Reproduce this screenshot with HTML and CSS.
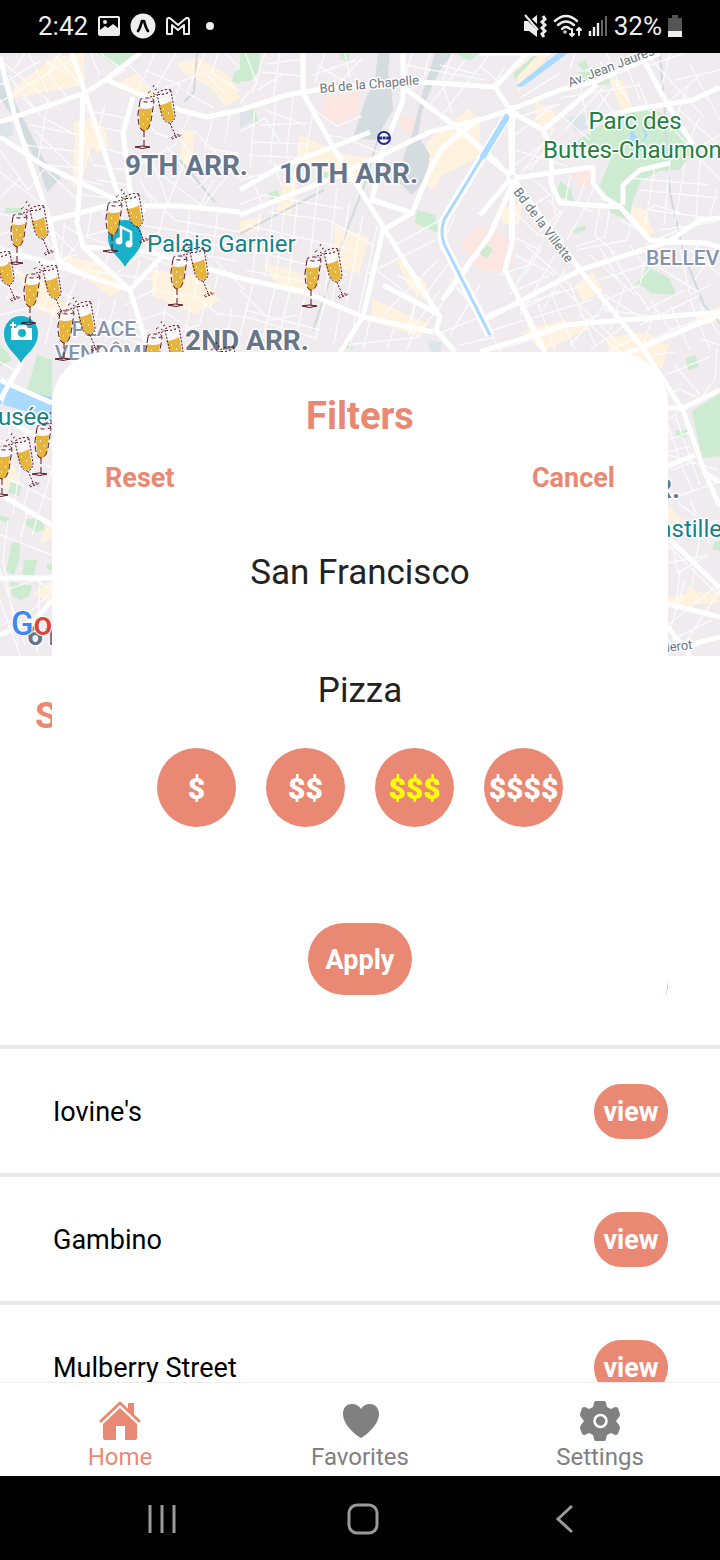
FILE: index.html
```html
<!DOCTYPE html>
<html lang="en">
<head>
<meta charset="utf-8">
<meta name="viewport" content="width=device-width, initial-scale=1">
<title>Filters</title>
<link rel="stylesheet" href="styles.css">
</head>
<body>
<header class="status">
  <div class="status-group">
    <span class="status-text">2:42</span>
    <svg width="22" height="20" viewBox="0 0 22 20"><rect x="1" y="1" width="20" height="18" rx="1" fill="none" stroke="#eee" stroke-width="2"/><circle cx="7" cy="6" r="2" fill="#eee"/><path d="M2 14l5-4 3 2 5-4 5 4v6H2z" fill="#eee"/></svg>
    <svg width="26" height="26" viewBox="0 0 26 26"><circle cx="13" cy="13" r="12.5" fill="#eee"/><path d="M8 18c2-2 3-7 4-10h2c1 3 2 8 4 10" fill="none" stroke="#000" stroke-width="2.6" stroke-linecap="round" stroke-linejoin="round"/></svg>
    <svg width="24" height="18" viewBox="0 0 24 18"><path d="M1 17V3c0-2 2-3 4-1l7 6 7-6c2-2 4-1 4 1v14h-5V8l-6 5-6-5v9z" fill="none" stroke="#eee" stroke-width="2" stroke-linejoin="round"/></svg>
    <span class="status-dot"></span>
  </div>
  <div class="status-group status-right">
    <svg width="24" height="24" viewBox="0 0 24 24" fill="#eee"><path d="M1 7h4l9 9v7l-8-6H1zM9 5l5-4v9z"/><path d="M2 1l13 15" stroke="#eee" stroke-width="2"/><path d="M20 2l2 3-3 3 3 3-3 3 3 3-3 3 2 3" fill="none" stroke="#eee" stroke-width="3"/></svg>
    <svg width="29" height="24" viewBox="0 0 29 24" fill="none" stroke="#eee" stroke-width="2.4" stroke-linecap="round"><path d="M2 7q11-10 22 0M5 11q8-7 16 0M9 15q4-4 8 0"/><circle cx="12" cy="18" r=".6"/><path d="M19 15v7m-2-2l2 2 2-2M26 21v-7m-2 2l2-2 2 2" stroke-width="2"/></svg>
    <svg width="20" height="22" viewBox="0 0 20 22"><path d="M2 21v-5M6 21v-9M10 21V8" stroke="#eee" stroke-width="2.4"/><path d="M14 21V5M18 21V1" stroke="#666" stroke-width="2"/></svg>
    <span class="status-text">32%</span>
    <svg width="14" height="24" viewBox="0 0 14 24"><path d="M4 1h6v3h4v19H0V4h4z" fill="#555"/><path d="M0 17h14v6H0z" fill="#eee"/></svg>
  </div>
</header>

<main class="screen">
  <svg class="map" viewBox="0 53 720 603" preserveAspectRatio="xMidYMin slice" role="img" aria-label="Map of Paris">
    <defs>
      <g id="glasses">
        <path d="M5 15L4 24L17 25L18 16Z" fill="#fff" fill-opacity=".6"/>
        <path d="M22 8L24 20L37 17L35 6Z" fill="#fff" fill-opacity=".6"/>
        <path d="M4 23Q10 25 17 23L15 40Q13 46 9 46Q5 46 5 40Z" fill="#e5b53e"/>
        <path d="M23 20Q30 20 36 16L39 32Q39 36 35 37Q31 37 29 34Z" fill="#e5b53e"/>
        <g fill="none" stroke="#5b1220" stroke-width="1">
          <ellipse cx="12" cy="15" rx="7" ry="2" stroke-dasharray="4 3"/>
          <path d="M5 16L3 29Q3 45 9 46Q15 46 17 30L19 16M9 46L9 61" stroke-dasharray="6 3"/>
          <path d="M0 62Q7 60 15 62Q8 65 0 62" />
          <ellipse cx="29" cy="7" rx="7" ry="2" transform="rotate(-14 29 7)" stroke-dasharray="2 2"/>
          <path d="M22 9L27 31Q30 38 35 38Q40 36 40 30L36 6M35 38L41 52M37 54L47 50M36 53Q40 49 46 50" stroke-dasharray="2 1.5"/>
          <path d="M13 8l3-2M15 12l5-1M18 2l1-2M20 5l2-1M18 8l3 2" stroke-dasharray="2 1"/>
        </g>
        <path d="M8 29h1M12 34h1M8 39h1M28 24h1M33 28h1" stroke="#fff" stroke-width="1.5"/>
      </g>
      <path id="pin" d="M0 0C-5-10-17-15-17-30A17 17 0 0 1 17-30C17-15 5-10 0 0Z" fill="#17b0c8"/>
    </defs>
    <rect y="53" width="720" height="603" fill="#efebef"/>

    <g fill="#fff3df">
      <path d="M52 58l32-5v32l-48 9-24 4 2-10zM74 122l18-4 12 10 5 18-12 8-5-9-12 42-8-2 3-44zM119 83l17-10 8 12 14 6-6 10zM178 63l20-5 32 18 10 22-14 8-20-22-22-10z"/>
      <path d="M183 130l12 2-4 35-12-4zM60 255l40 8 28 24-18 10-32-26zM15 270l30 10 26 31-8 10-28-13zM151 270l50 6 20 24-26 14-42-18z"/>
      <path d="M240 221l22-4-2 12-20 6zM286 172l13 3-8 40-14-4zM300 135l38 18 32 5-6 30-24-10-24-12-20-4zM335 225l34 13-10 35-26-6zM262 262l40 12 14 24-36-9z"/>
      <path d="M427 142l42-33 11 12v35l-38 20-8 14-20-12zM395 257l30 24 8 25-24-18zM372 299l55 24-6 14-50-16zM518 65l16-12 14 2-30 38zM535 100l20 12-2 19-16-6zM609 80l14 0 10 32-10 3z"/>
      <path d="M500 207l22-4-3 22-17-2zM620 205l24 4 10 24-8 5-16-20zM575 285l18-13 10 18-20 12zM520 332l44-12 25 9-45 22zM605 338l42-6 20 15-20 15-34-2zM655 347l15-4-8 26-14-8zM696 313l24-6v14l-20 5z"/>
      <path d="M0 455l12 5 8 23-8 8-12-6zM40 545l12-8v-10h-8zM32 595l12-10 8-5v25l-14-10zM668 505l14 15 10 4-12 12-12-10zM668 598l18-4 3-8 8 6 22 1v10l-26 1-10 6-15-7z"/>
    </g>
    <g fill="#fce6e2"><path d="M323 97l38-6-3 24-10 4-2 8-24-10zM400 116l17 3-2 15-16-5zM480 225l20 8 12 13 1 20-15 6-18-2-20-25zM569 170l24-2-1 16-12 3z"/></g>
    <g fill="#cdebd0">
      <path d="M97 53h39l-10 15-10-2zM234 72l6-2v14l-8-2zM240 53h20l-2 19-8 9h-10zM341 53l9 1-2 8-8-3zM457 53h22l-8 8-8-3zM250 110l5-3 3 15-6 2zM5 208h17v5H5zM121 197l11-4 2 6-9 3zM268 193l10-3 2 9-8 1zM324 172l9 1-4 7-5-2zM417 210l18 5 4 18-24-10zM343 341l8-1 2 9-10-1zM484 242l9 8-7 9-9-8z"/>
      <path d="M560 181l12 9v8l-15-7zM578 72h18l12-6 2 18-26 1zM540 53l-25 26-2-5 23-21zM577 64l8-4 4 7-5 3zM576 142l15-11 30-17 30-6 16 8 28 34-16 20-20 1-18 10-8 19-4 20-18-7-13-25 15-33zM557 190l13 0 5 12-15-5zM573 230l12-5 1 5-12 4zM635 286l12-20 23 13 6 16-25-2-8-7z"/>
      <path d="M0 344l8 10 4 6-12 6zM27 390l10-35 15 5v47l-15-5zM11 482l11 4-3 10-11-4zM24 519h18l3 11-9 2-10-7zM0 515l10 4-3 4-7-3zM12 542h8l-1 18-5 15-8-4zM24 560l13 0-3 16-12-2zM10 582l22 4-3 10-8 4-9-4zM47 563l5 2v6l-5-2zM685 359l10-4 4 11-10 5zM676 431l12-1-3 8-9-2zM692 411l28-18v63l-18 2zM715 541h5v10l-8-2z"/>
    </g>
    <g fill="#dde5eb"><path d="M0 120l12 3 2 12-14 4zM240 106l10 3 2 13-12 6zM568 118l20-6 2 16-15 4zM428 340l14 2-2 11-10-2zM0 70l8 2 4 8-12 4z"/></g>
    <g fill="#d5dcdf"><path d="M0 82l15 20 29 58 17 18-14 14-8-24-20-42L0 98zM378 53h12l-2 20 4 20 1 17-18 30-22-2 12-38 10-20zM435 53h18l-15 20-16 38-4 24 12 20-4 24-14 16-12-12 4-28 8-20 10-40z"/></g>
    <g fill="none" stroke="#d2d9dc" stroke-width="2"><path d="M197 53l-3 39-10 10M382 125l-16 55-22 58-31 92M240 234l84-44M660 53l4 50 6 90 14 62 20 50 16 18M180 160l35 42"/></g>
    <g fill="#aadaff"><path d="M558 53h10l-46 34-6-1z"/><path d="M0 378l32 14 20 5v28l-24-13-28-8z"/><path d="M630 128l8 10-4 8-4-4zM642 125l6 10-6 8 3-8z"/></g>

    <g class="street">
      <path d="M0 60l60 50M0 85l40-24M15 68l10-15M28 53l20 40M45 60l22 15M0 102l60-36 15-8M22 97l20 20 30 16M8 75l28 35M60 53l-12 20 20 25M30 125l50 10M25 145l56 7M38 160l10-60M55 55l25 30M90 53l10 22M0 150l28 40 20-25 32 3M0 172l44 34M0 198l20-20M35 130l45 45M46 170l32 30M100 53l25 18-16 8M130 65l30 35M155 53l-16 36M176 53l-20 34 10 20M160 90l45-18 20 22M205 53l-18 40 27 15M218 53l-6 20 28 18M225 53l14 14M145 70l35 15-10 22M85 110l40 8M90 125l33 7M90 145l35 9M93 165l33 5M97 180l32 5M105 105l-8 30M82 132l10 30M81 180l22 5M81 195l30 3"/>
      <path d="M140 110l15 23 28 8 12 25M155 103l-5 24M190 115l-15 30-45 25M213 118l-8 30 35 6M230 113l-5 30M165 145l30 38M193 130l30 30-25 28M218 157l22 22M150 155l18 48M188 153l-20 50M213 180l-15 30M140 180l12 22M145 190l30 30 65 12M158 172l45 35M240 160l-40 50M140 206l-8 20 15 20 90 15M165 207l-10 44M190 208l-5 47M218 212l-6 45M140 225l100 15M148 238l86 9M65 222l-5 42M63 225l20 12 30-8M55 232l20 20M92 207l-5 30 30 10M100 205l10 24M78 244l-20 24M98 255l-15 25M117 225l-12 40M85 270l70 10M115 275l25-20 30 10M125 305l28-15 42 6 25 20M135 322l30-10 30 20M140 260l-8 30M158 260l-5 35M180 255l-6 45M200 255l-6 45M215 260l30 30M220 265l-10 45"/>
      <path d="M0 214l50 10M0 235l35-15 24 40M0 246l44 18 35-10M10 215l14 45M30 217l-12 40M0 264l75 35M40 255l-15 45M60 260l-16 48M22 255l-15 44M76 280l-14 35M0 283l42 26 45 4M0 315l40-10M45 310l60 10 45 22M85 300l-10 40M100 298l-8 40M115 300l-10 42M55 305l-10 40M32 317l-8 45M10 330l20 30M62 320l85 25M130 325l30 10 40-10M165 308l-5 35M190 307l-5 30M205 303l-5 20M232 308l-5 30M215 313l36 5 65 20"/>
      <path d="M245 53l12 30-17 20M265 53l-12 40M280 53l-7 46M262 72l40 4M267 64l36-5M257 90l25-15M265 110l40 15M260 125l52-2M253 142l55 2M247 155l55 3M255 103l-5 65M276 100l-6 63M293 97l-7 60M240 132l25-14 15 24M240 180l30-8M250 175l12 28M274 163l8 24M288 158l4 26M240 204l24-9M313 112l-8 46M317 65l25 15 20-22M313 75l43-15M325 53l-10 30M345 53l5 25M405 65l80 15M412 53l-8 27M430 53l-8 30M410 90l20-20M452 53l-10 30 10 30M465 60l-35 45M485 60l-42 54M440 65l40 10M315 110l22 16 25-10M325 135l20 3 35 15M300 145l-9 50M260 213l-8 65M273 207l-8 70M285 203l-9 77M298 197l-10 88M318 187l-12 105M337 188l-12 108M350 202l-18 100M363 215l-17 90M377 226l-19 90M250 250l98 25M245 225l110 25M264 195l80 14M268 212l60 8 45 25M246 270l75 15"/>
      <path d="M240 290l30 30 28-5M245 310l75 20M254 280l-14 55M275 288l-12 50M290 290l-12 50M305 296l-8 35M325 301l-10 40M340 310l-6 34M355 318l-5 30M345 345l75-8M370 320l-7 30M395 325l-8 24M415 330l-8 20M365 275l70-35M370 265l60 46M395 245l45-25M398 275l20 12-8 45M420 280l-12 50M440 290l-32 45M383 315l55-55M455 215l-15 35M455 255l-30 40M468 270l-45 58M480 285l-30 50M450 280l40 40M480 255l-30 25M435 335l70-28M490 330l-35-45M460 345l35-8"/>
      <path d="M480 66l20 17M490 53l-10 14M505 67l-13 20M520 98l40-25M515 118l45-14M515 135l38-28M530 125l20-20M515 150l52 16M515 165l33-25M530 170l20-25M555 128l-30 40M550 150l-30 23M560 115l30 25M580 85l10 50M597 90l18 25M605 85l-40 45M615 85l-30 40M607 53l13 35M575 53l-5 15M600 62l30 40M625 62l15 37M560 98l80-13M645 53l60 65M650 65l35-12M670 53l-10 40M675 80l45-10M690 65l30 55M688 87l-18 45M700 75l-35 30M680 111l40 35M665 120l55 60M650 112l-12-30M700 118l-15 30M695 150l25-15"/>
      <path d="M535 180l15 15-25 15M550 180l5 35M570 175l-5 30M585 180l-8 25 16 7M595 185l-14 30-14 25M548 200l12 12-20 20M610 207l-5 30-30 10M600 205l-5 30 20 18M563 210l-15 25M635 212l-8 28-50 10M620 220l20 10M640 215l15-10 25 8M640 190l78 8M630 178l78 7M655 165l-10 60M670 160l-6 65M685 163l-10 60M700 160l-4 60M717 190l-8 30M650 210l60 8M660 230l55-8M645 245l40-18M510 235l30 15-15 25M513 210l25 25 25 5M515 255l40 20M525 245l45 40M500 275l35-12M510 293l40-18M520 310l40-20M540 245l-30 50M555 255l-35 60M565 270l-22 40M600 248l20 35M610 248l15 28 25 35M630 245l14 20-45 15M590 255l45 40M645 260l-5 25-35 15M665 250l-25 30M680 250l10 45 20-10M690 250l30 25M655 265l45 28M700 240l-8 20M715 250l-20 30M645 310l40-20M640 325l60-30M650 300l20 30 30-10M605 295l40 25M600 290l5 20 40 5M625 285l-15 45"/>
      <path d="M485 315l100-30M492 330l100-30M500 350l100-35M515 295l25 55M535 295l20 55M550 290l25 60M570 285l25 60M605 305l-35 40M625 325l-35 25M635 338l-30 15M560 285l60 60M580 315l40 38M480 305l20 48M655 310l-12 35M670 305l20 45M690 300l20 50M650 340l70-30M700 305l20 30M665 375l45-18M665 395l15-6 20 10 15-20 2-30M675 365l25 30M655 355l20-3M720 345l-20-6M668 455l50 15M668 420l20-15M668 425l15 45 10 20M675 415l25 70M668 440l22-8M672 470l20-8M668 452l23-6M678 503l42 30M668 500l50-18M690 500l20 45M680 530l40-10M668 563l40-8-30 18-5-25 15-18M680 570l-5 45M668 545l50 50M700 535l-8 50M668 625l50-40M720 590l-40 60M685 580l-15 50M710 575l10 20M672 640l40-20"/>
      <path d="M0 362l20 12M10 377l-8 28M0 440l52 28M0 460l40-22M0 475l52 25M10 425l-8 70M25 430l-12 85M40 438l-16 68M52 470l-20 65M0 535l52 20M8 520l-5 40 15 85M0 570l25 75M5 590l30-10 17 10M28 510l-8 30M0 626l35-18 17-17M40 578l-3 75M0 600l20 55"/>
    </g>
    <g class="road">
      <path d="M0 122L85 93L107 79L140 53M107 80L137 93L180 110L207 117L240 110L287 95L327 88L420 82L495 87M72 53L85 93L107 160L120 200M83 93L80 183L77 223L83 247L130 290L147 345M0 57L15 117L30 163L50 220L58 260L85 275M0 137L43 165L117 200L145 212M133 97L123 133L130 190L143 220M50 220L107 206L180 206L240 212M83 247L150 252L240 278M0 250L40 260L130 290L165 253"/>
      <path d="M303 53V93L333 147L377 217L393 243L440 317L436 330L455 352M240 190L280 167L333 147L370 132M240 215L333 178L382 155L430 132L480 120L510 110L560 90L597 81L660 53M403 53V100L383 150L372 200L412 213L430 170L442 148L480 118M403 87L460 130L500 165M412 213L383 230L363 317L340 352M240 278L307 293L363 317L433 332M383 285L440 315M442 300L490 235L512 185"/>
      <path d="M527 53L495 87L510 110L512 177L580 270L642 347L683 410L705 473L720 507M512 177V243L505 270L545 352M484 320L580 270L667 242L705 243L720 247M512 112L543 130L552 150L551 183L560 203L620 207L650 240L680 242M515 178L593 167L593 183L605 198L620 207M543 130L597 85M720 87L693 100L630 110L595 120M640 53L665 100L693 145M623 205L623 185L640 170L670 163M668 242L700 220L720 218M480 352L565 325L720 312M603 363L642 347L720 315M480 53L550 53M480 150L512 177L480 215M668 408L683 408L720 390M668 466L695 455M705 473L720 482M668 538L720 588M668 604L720 617M668 627L690 656M690 645L720 637M0 380L52 403M0 400L20 365L28 344M0 415L52 446M0 494L52 525M0 578H52M0 635L35 620L52 600"/>
    </g>
    <path d="M508 115L444 220Q440 232 444 244L490 335" fill="none" stroke="#fff" stroke-width="9"/>
    <path d="M508 115L444 220Q440 232 444 244L490 335" fill="none" stroke="#aadaff" stroke-width="3"/>
    <path d="M508 115L482 158" stroke="#aadaff" stroke-width="6"/>
    <path d="M512 105V240" stroke="#fff" stroke-width="6"/>
    <circle cx="512" cy="177" r="4" fill="#efebef" stroke="#fff" stroke-width="3"/>

    <circle cx="384" cy="138" r="6" fill="#fff" stroke="#1f2b8f" stroke-width="2"/>
    <path d="M379 138h10" stroke="#1f2b8f" stroke-width="3" stroke-dasharray="3 .6"/>
    <use href="#pin" x="125" y="267"/>
    <path d="M121 241V227L131 232V244" fill="none" stroke="#fff" stroke-width="2.500"/><circle cx="119" cy="241" r="3.500" fill="#fff"/><circle cx="129" cy="244" r="3.500" fill="#fff"/>
    <use href="#pin" x="21" y="363"/>
    <path d="M11 328h5l2-3h8l2 3h4v12H11z" fill="#fff"/><circle cx="22" cy="333" r="4" fill="#17b0c8"/><path d="M9 324h8M13 320v8" stroke="#17b0c8" stroke-width="4"/><path d="M10 325h6M13 322v6" stroke="#fff" stroke-width="2"/>

    <g class="map-labels">
      <g class="district">
        <text x="186.5" y="175" text-anchor="middle">9TH ARR.</text>
        <text x="348.5" y="183" text-anchor="middle">10TH ARR.</text>
        <text x="247" y="350" text-anchor="middle">2ND ARR.</text>
        <text x="680" y="498" text-anchor="end">R.</text>
        <text x="27" y="645">61</text>
      </g>
      <g class="quarter"><text x="104" y="336" text-anchor="middle">PLACE</text><text x="104" y="360" text-anchor="middle">VENDÔME</text><text x="646" y="265">BELLEV</text></g>
      <g class="poi"><text x="147" y="252">Palais Garnier</text><text x="-2" y="425">usée</text><text x="722" y="537" text-anchor="end">astille</text></g>
      <g class="park"><text x="635" y="129" text-anchor="middle">Parc des</text><text x="543" y="158">Buttes-Chaumon</text></g>
      <g class="street-name">
        <text transform="translate(320 93) rotate(-5)">Bd de la Chapelle</text>
        <text transform="translate(570 87) rotate(-21)">Av. Jean Jaurès</text>
        <text transform="translate(513 192) rotate(53)">Bd de la Villette</text>
        <text transform="translate(667 652) rotate(-7)">lerot</text>
      </g>
    </g>
    <use href="#glasses" x="135" y="85"/><use href="#glasses" x="103" y="189"/><use href="#glasses" x="8" y="201"/><use href="#glasses" x="-26" y="247"/><use href="#glasses" x="21" y="261"/><use href="#glasses" x="55" y="297"/><use href="#glasses" x="168" y="243"/><use href="#glasses" x="143" y="321"/><use href="#glasses" x="198" y="342"/><use href="#glasses" x="302" y="244"/><use href="#glasses" x="32" y="412"/><use href="#glasses" x="-7" y="433"/>
    <text class="map-logo" x="11" y="635"><tspan fill="#4285f4">G</tspan><tspan fill="#db4437">o</tspan></text>
  </svg>

  <section class="results">
    <h1 class="results-title">S</h1>
    <ul class="list">
      <li class="row"><span></span><button class="view" type="button"></button></li>
      <li class="row"><span>Iovine's</span><button class="view" type="button">view</button></li>
      <li class="row"><span>Gambino</span><button class="view" type="button">view</button></li>
      <li class="row"><span>Mulberry Street</span><button class="view" type="button">view</button></li>
    </ul>
  </section>

  <form class="panel">
    <h2 class="panel-title">Filters</h2>
    <div class="panel-actions">
      <button class="link" type="reset">Reset</button>
      <button class="link" type="button">Cancel</button>
    </div>
    <input class="field city" type="text" aria-label="City" value="San Francisco">
    <input class="field food" type="text" aria-label="Food" value="Pizza">
    <div class="prices">
      <button class="price" type="button">$</button>
      <button class="price" type="button">$$</button>
      <button class="price selected" type="button">$$$</button>
      <button class="price" type="button">$$$$</button>
    </div>
    <button class="apply" type="button">Apply</button>
  </form>
</main>

<nav class="tabs">
  <a class="tab active" href="#home"><svg width="42" height="40" viewBox="0 0 42 40" fill="currentColor"><path d="M29 2h6v13l-6-6z"/><path d="M2 20L21 2l19 18" fill="none" stroke="currentColor" stroke-width="3" stroke-linecap="round" stroke-linejoin="round"/><path d="M21 7l17 16v14q0 2-2 2H26V25h-9v14H6q-2 0-2-2V23z"/><path d="M3 22L21 5l18 17" fill="none" stroke="#fff" stroke-width="1"/></svg>Home</a>
  <a class="tab" href="#favorites"><svg width="42" height="40" viewBox="0 0 42 40" fill="currentColor"><path d="M22 37C15 33 4 23 4 13C4 6 8 3 13 3Q19 3 22 8Q25 3 31 3C36 3 40 7 40 13C40 23 29 33 22 37Z"/></svg>Favorites</a>
  <a class="tab" href="#settings"><svg width="42" height="40" viewBox="0 0 42 40" fill="currentColor"><path d="M17 0h8q2 0 2 2l1 4 4 2 4-2q2 0 3 1l2 6q0 2-1 3l-3 4 3 4q1 1 1 3l-2 6q-1 1-3 1l-4-2-4 2-1 4q0 2-2 2h-8q-2 0-2-2l-1-4-4-2-4 2q-2 0-3-1l-2-6q0-2 1-3l3-4-3-4q-1-1-1-3l2-6q1-1 3-1l4 2 4-2 1-4q0-2 2-2z"/><circle cx="21.500" cy="20" r="6" fill="none" stroke="#fff" stroke-width="2.500"/></svg>Settings</a>
</nav>

<div class="system-nav">
  <button type="button" aria-label="Recent apps"><svg width="32" height="32" viewBox="0 0 32 32"><path d="M4 2v28M16 2v28M28 2v28" stroke="#9a9a9a" stroke-width="3"/></svg></button>
  <button type="button" aria-label="Home screen"><svg width="32" height="32" viewBox="0 0 32 32"><rect x="2" y="2" width="28" height="28" rx="8" fill="none" stroke="#9a9a9a" stroke-width="3"/></svg></button>
  <button type="button" aria-label="Back"><svg width="32" height="32" viewBox="0 0 32 32"><path d="M23 3L9 16l14 13" fill="none" stroke="#9a9a9a" stroke-width="3"/></svg></button>
</div>
</body>
</html>
```
FILE: styles.css
```css
* { box-sizing: border-box; }

body {
  margin: 0;
  height: 100vh;
  display: flex;
  flex-direction: column;
  overflow: hidden;
  background: #fff;
  color: #000;
  font-family: Roboto, "Liberation Sans", sans-serif;
  font-size: 27px;
}

button { border: 0; padding: 0; background: none; font: inherit; color: inherit; }
svg { display: block; flex: none; }

.status {
  flex: none;
  display: flex;
  justify-content: space-between;
  align-items: center;
  height: 53px;
  padding: 0 38px 2px;
  background: #000;
  color: #eee;
}
.status-group { display: flex; align-items: center; gap: 10px; }
.status-right { gap: 6px; }
.status-text { font-size: 26px; line-height: 32px; }
.status-dot { width: 8px; height: 8px; margin-left: 6px; border-radius: 50%; background: #eee; }

.screen { position: relative; flex: 1; min-height: 0; overflow: hidden; }
.map { width: 100%; height: 603px; }

.street { fill: none; stroke: #fff; stroke-width: 1.5; opacity: .75; }
.road { fill: none; stroke: #fff; stroke-width: 5; stroke-linejoin: round; }
.map-labels { stroke: #fff; stroke-width: 3; stroke-linejoin: round; paint-order: stroke; }
.district { fill: #67758a; font-size: 28px; font-weight: 700; }
.quarter { fill: #8493ab; font-size: 21px; font-weight: 500; }
.poi { fill: #15828c; font-size: 24px; }
.park { fill: #238142; font-size: 24px; }
.street-name { fill: #6b7680; font-size: 13px; }
.map-logo { font-size: 33px; font-weight: 500; stroke: #fff; stroke-width: 2; paint-order: stroke; }

.results-title {
  height: 265px;
  margin: 0;
  padding: 36px 35px 0;
  color: #e98973;
  font-size: 36px;
  line-height: 48px;
}
.list { margin: 0; padding: 0; list-style: none; }
.row {
  display: flex;
  align-items: center;
  justify-content: space-between;
  height: 128px;
  padding: 0 52px 0 53px;
  border-bottom: 4px solid #ebebeb;
}
.row span { padding-top: 2px; }
.view {
  width: 74px;
  height: 55px;
  padding-top: 2px;
  border-radius: 27px;
  background: #ea8973;
  color: #fff;
  font-weight: 700;
}

.panel {
  position: absolute;
  top: 299px;
  left: 52px;
  right: 52px;
  display: flex;
  flex-direction: column;
  padding: 40px 53px 37px;
  border-radius: 53px;
  background: #fff;
}
.panel-title { margin: 0; color: #e98973; font-size: 38px; line-height: 48px; text-align: center; }
.panel-actions { display: flex; justify-content: space-between; margin-top: 22px; }
.link { color: #e98973; font-weight: 700; line-height: 32px; }
.field {
  width: 100%;
  height: 48px;
  padding: 0;
  border: 0;
  background: none;
  color: #222;
  font: 35px/48px Roboto, "Liberation Sans", sans-serif;
  text-align: center;
}
.city { margin-top: 55px; }
.food { margin-top: 70px; }
.prices { display: flex; justify-content: center; gap: 30px; margin-top: 33px; }
.price {
  width: 79px;
  height: 79px;
  padding-top: 2px;
  border-radius: 50%;
  background: #ea8973;
  color: #fff;
  font-size: 30px;
  font-weight: 900;
}
.selected { color: #ff0; }
.apply {
  align-self: center;
  width: 104px;
  height: 72px;
  margin-top: 96px;
  padding-top: 2px;
  border-radius: 36px;
  background: #ea8973;
  color: #fff;
  font-weight: 700;
}

.tabs {
  flex: none;
  display: grid;
  grid-template-columns: repeat(3, 1fr);
  height: 94px;
  padding-top: 18px;
  border-top: 1px solid #eee;
  background: #fff;
}
.tab {
  display: flex;
  flex-direction: column;
  align-items: center;
  color: #808080;
  font-size: 24px;
  line-height: 32px;
  text-decoration: none;
}
.active { color: #ea8973; }

.system-nav {
  flex: none;
  display: grid;
  grid-template-columns: repeat(3, 1fr);
  height: 84px;
  padding: 2px 54px 0 61px;
  background: #000;
}
.system-nav button { display: flex; align-items: center; justify-content: center; }
```
